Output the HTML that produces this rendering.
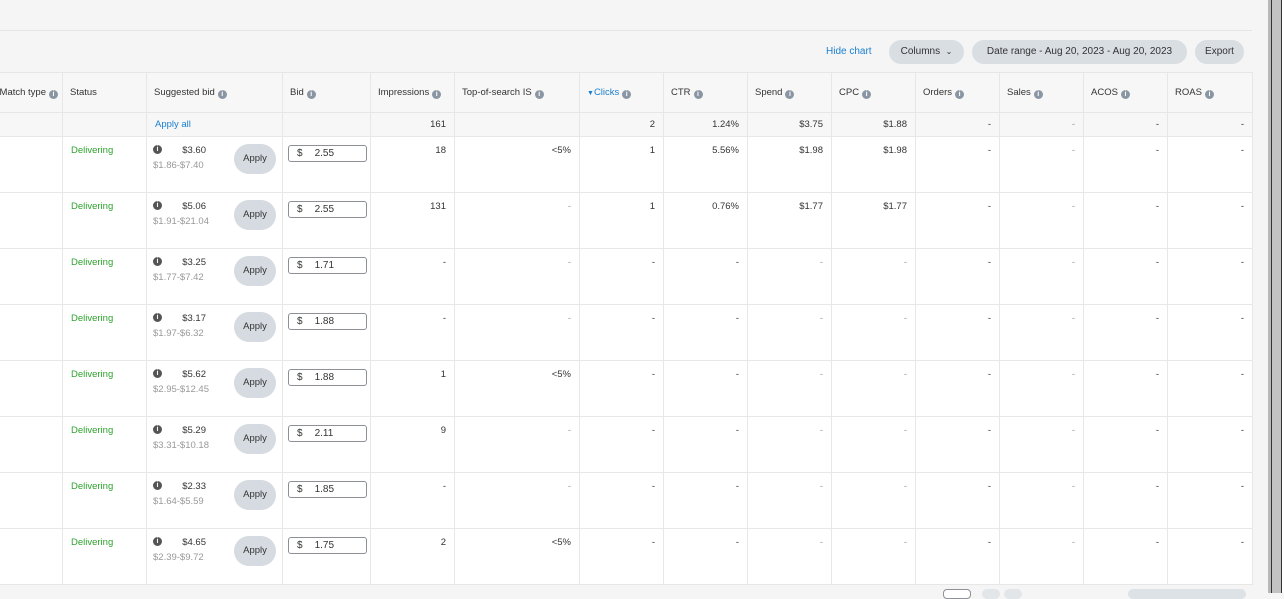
<!DOCTYPE html>
<html><head><meta charset="utf-8"><style>
*{box-sizing:border-box;margin:0;padding:0}
body{width:1284px;height:593px;overflow:hidden;background:#f5f5f5;font-family:"Liberation Sans",sans-serif;font-size:10px;color:#333;position:relative}
.sep{position:absolute;left:0;top:30px;width:1252px;height:1px;background:#e5e5e5}
.tb{position:absolute;top:40px;height:24px;border-radius:12px;background:#d9dee3;color:#333;font-size:10px;line-height:24px;text-align:center}
table{position:absolute;left:-60px;top:72px;width:1312px;border-collapse:collapse;table-layout:fixed;background:#fff}
td{border:1px solid #e7e7e7;vertical-align:top;padding:0 8px;overflow:visible}
tr.h td{height:40px;background:#f7f7f7;vertical-align:middle;padding-left:7px;font-size:9.5px;color:#333}
tr.t td{height:24px;background:#f7f7f7;vertical-align:middle;text-align:right;font-size:9.5px}
tr.d td{height:56px;padding-top:8px;text-align:right;font-size:9.5px;color:#333}
td.l{text-align:left!important}
.i{display:inline-block;width:9px;height:9px;border-radius:50%;background:#8a96a3;color:#fff;font-size:7px;line-height:9px;text-align:center;font-weight:bold;vertical-align:-1px;margin-left:3px}
.g{color:#2ea32e!important}
.b{color:#1a7fd0!important}
.m{color:#999!important}
.sb{position:relative;text-align:left;height:40px}
.sb .ic{position:absolute;left:-2px;top:0;width:9px;height:9px;border-radius:50%;background:#555;color:#fff;font-size:7px;line-height:9px;text-align:center;font-weight:bold}
.sb .p{position:absolute;left:-2px;width:53px;top:0;text-align:right;color:#333}
.sb .r{position:absolute;left:-2px;top:15px;color:#999}
.sb .a{position:absolute;left:79px;top:-1px;width:42px;height:30px;border-radius:15px;background:#d5dbe1;line-height:30px;text-align:center;color:#333}
.in{width:79px;height:17px;border:1px solid #8d9096;border-radius:3px;text-align:left;line-height:15px;padding-left:8px;font-size:10px;margin-left:-3px}
.in span{margin-left:12px}
</style></head><body>
<div class="sep"></div>
<div style="position:absolute;left:826px;top:46px;color:#1a7fd0;font-size:10px">Hide chart</div>
<div class="tb" style="left:889px;width:75px">Columns &nbsp;<span style="font-size:8px">&#8964;</span></div>
<div class="tb" style="left:972px;width:215px">Date range - Aug 20, 2023 - Aug 20, 2023</div>
<div class="tb" style="left:1195px;width:49px">Export</div>
<table>
<colgroup><col style="width:122px"><col style="width:84px"><col style="width:136px"><col style="width:88px"><col style="width:84px"><col style="width:125px"><col style="width:84px"><col style="width:84px"><col style="width:84px"><col style="width:84px"><col style="width:84px"><col style="width:84px"><col style="width:84px"><col style="width:85px"></colgroup>
<tr class="h"><td style="text-align:right;padding-right:4px">Match type<span class="i">i</span></td><td>Status</td><td>Suggested bid<span class="i">i</span></td><td>Bid<span class="i">i</span></td><td>Impressions<span class="i">i</span></td><td>Top-of-search IS<span class="i">i</span></td><td><span style="color:#1a7fd0;font-size:7px">&#9660;</span><span class="b">Clicks</span><span class="i">i</span></td><td>CTR<span class="i">i</span></td><td>Spend<span class="i">i</span></td><td>CPC<span class="i">i</span></td><td>Orders<span class="i">i</span></td><td>Sales<span class="i">i</span></td><td>ACOS<span class="i">i</span></td><td>ROAS<span class="i">i</span></td></tr>
<tr class="t"><td></td><td></td><td class="l b">Apply all</td><td></td><td>161</td><td></td><td>2</td><td>1.24%</td><td>$3.75</td><td>$1.88</td><td>-</td><td class="m">-</td><td>-</td><td>-</td></tr>
<tr class="d"><td></td><td class="l g">Delivering</td><td><div class="sb"><div class="ic">i</div><div class="p">$3.60</div><div class="r">$1.86-$7.40</div><div class="a">Apply</div></div></td><td class="l"><div class="in">$<span>2.55</span></div></td><td>18</td><td>&lt;5%</td><td>1</td><td>5.56%</td><td>$1.98</td><td>$1.98</td><td>-</td><td class="m">-</td><td>-</td><td>-</td></tr>
<tr class="d"><td></td><td class="l g">Delivering</td><td><div class="sb"><div class="ic">i</div><div class="p">$5.06</div><div class="r">$1.91-$21.04</div><div class="a">Apply</div></div></td><td class="l"><div class="in">$<span>2.55</span></div></td><td>131</td><td class="m">-</td><td>1</td><td>0.76%</td><td>$1.77</td><td>$1.77</td><td>-</td><td class="m">-</td><td>-</td><td>-</td></tr>
<tr class="d"><td></td><td class="l g">Delivering</td><td><div class="sb"><div class="ic">i</div><div class="p">$3.25</div><div class="r">$1.77-$7.42</div><div class="a">Apply</div></div></td><td class="l"><div class="in">$<span>1.71</span></div></td><td>-</td><td class="m">-</td><td>-</td><td>-</td><td class="m">-</td><td class="m">-</td><td>-</td><td class="m">-</td><td>-</td><td>-</td></tr>
<tr class="d"><td></td><td class="l g">Delivering</td><td><div class="sb"><div class="ic">i</div><div class="p">$3.17</div><div class="r">$1.97-$6.32</div><div class="a">Apply</div></div></td><td class="l"><div class="in">$<span>1.88</span></div></td><td>-</td><td class="m">-</td><td>-</td><td>-</td><td class="m">-</td><td class="m">-</td><td>-</td><td class="m">-</td><td>-</td><td>-</td></tr>
<tr class="d"><td></td><td class="l g">Delivering</td><td><div class="sb"><div class="ic">i</div><div class="p">$5.62</div><div class="r">$2.95-$12.45</div><div class="a">Apply</div></div></td><td class="l"><div class="in">$<span>1.88</span></div></td><td>1</td><td>&lt;5%</td><td>-</td><td>-</td><td class="m">-</td><td class="m">-</td><td>-</td><td class="m">-</td><td>-</td><td>-</td></tr>
<tr class="d"><td></td><td class="l g">Delivering</td><td><div class="sb"><div class="ic">i</div><div class="p">$5.29</div><div class="r">$3.31-$10.18</div><div class="a">Apply</div></div></td><td class="l"><div class="in">$<span>2.11</span></div></td><td>9</td><td class="m">-</td><td>-</td><td>-</td><td class="m">-</td><td class="m">-</td><td>-</td><td class="m">-</td><td>-</td><td>-</td></tr>
<tr class="d"><td></td><td class="l g">Delivering</td><td><div class="sb"><div class="ic">i</div><div class="p">$2.33</div><div class="r">$1.64-$5.59</div><div class="a">Apply</div></div></td><td class="l"><div class="in">$<span>1.85</span></div></td><td>-</td><td class="m">-</td><td>-</td><td>-</td><td class="m">-</td><td class="m">-</td><td>-</td><td class="m">-</td><td>-</td><td>-</td></tr>
<tr class="d"><td></td><td class="l g">Delivering</td><td><div class="sb"><div class="ic">i</div><div class="p">$4.65</div><div class="r">$2.39-$9.72</div><div class="a">Apply</div></div></td><td class="l"><div class="in">$<span>1.75</span></div></td><td>2</td><td>&lt;5%</td><td>-</td><td>-</td><td class="m">-</td><td class="m">-</td><td>-</td><td class="m">-</td><td>-</td><td>-</td></tr>
</table>
<div style="position:absolute;left:943px;top:589px;width:28px;height:10px;border:1px solid #8d9096;border-radius:4px;background:#fff"></div>
<div style="position:absolute;left:982px;top:589px;width:18px;height:10px;border-radius:9px;background:#e3e6e9"></div>
<div style="position:absolute;left:1004px;top:589px;width:18px;height:10px;border-radius:9px;background:#e3e6e9"></div>
<div style="position:absolute;left:1128px;top:589px;width:118px;height:10px;border-radius:9px;background:#dde2e6"></div>
<div style="position:absolute;left:1268px;top:0;width:3px;height:593px;background:#b8b8b8"></div>
<div style="position:absolute;left:1271px;top:0;width:1px;height:593px;background:#333"></div>
<div style="position:absolute;left:1272px;top:0;width:9px;height:593px;background:#c2c2c2"></div>
<div style="position:absolute;left:1281px;top:0;width:1px;height:593px;background:#333"></div>
<div style="position:absolute;left:1282px;top:0;width:2px;height:593px;background:#fff"></div>
</body></html>
